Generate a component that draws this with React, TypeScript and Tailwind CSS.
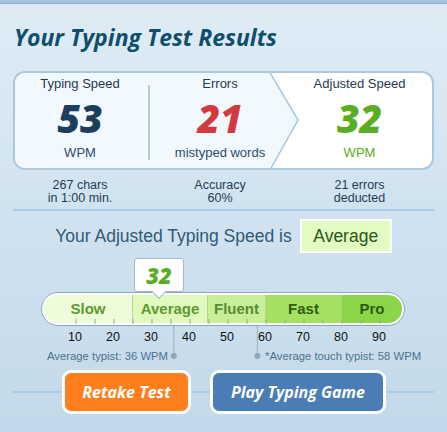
const ticks = Array.from({ length: 17 }, (_, i) => 10 + i * 5);
const scale = [10, 20, 30, 40, 50, 60, 70, 80, 90];

// x position (page px) of a wpm value on the meter
const toX = (wpm: number) => 37 + 3.8 * wpm;

const segments = [
  { label: "Slow", w: 88, bg: "bg-[#effcd9]", text: "text-[#5f9a30]" },
  { label: "Average", w: 75, bg: "bg-[#e0f9bd]", text: "text-[#5f9a30]" },
  { label: "Fluent", w: 58, bg: "bg-[#c7ef99]", text: "text-[#5a8c38]" },
  { label: "Fast", w: 76, bg: "bg-[#a5e160]", text: "text-[#2f5b13]" },
  { label: "Pro", w: 61, bg: "bg-[#8bd548]", text: "text-[#2f5b13]" },
];

function StatColumn({
  label,
  value,
  unit,
  valueClass,
  unitClass,
}: {
  label: string;
  value: string;
  unit: string;
  valueClass: string;
  unitClass: string;
}) {
  return (
    <div className="flex flex-col items-center pt-[3px]">
      <div className="text-[13px] leading-[16px] text-[#1f3a52]">{label}</div>
      <div
        className={`font-['Open_Sans',sans-serif] italic font-extrabold text-[39px] leading-[52px] ${valueClass}`}
      >
        {value}
      </div>
      <div className={`mt-[1px] text-[13px] leading-[16px] ${unitClass}`}>
        {unit}
      </div>
    </div>
  );
}

export default function App() {
  return (
    <div className="w-[447px] h-[432px] overflow-hidden bg-gradient-to-b from-[#dfecf6] to-[#c3d9e9] font-['Liberation_Sans',Arial,sans-serif]">
      <div className="h-[4px] bg-[#a4c6dd] border-b border-[#8db4cf]" />
      <div className="px-[13px]">
        <h1 className="mt-[19px] h-[28px] leading-[28px] pl-[1px] font-['Open_Sans',sans-serif] italic font-bold text-[23px] text-[#0f4f6e]">
          Your Typing Test Results
        </h1>

        {/* results card */}
        <div className="relative mt-[20px] h-[99px] rounded-[12px] border-2 border-[#abc8de] bg-white overflow-hidden">
          <svg
            className="absolute inset-0"
            width="417"
            height="95"
            viewBox="0 0 417 95"
          >
            <polygon points="0,0 254,0 283,47 255,95 0,95" fill="#f1f8fe" />
            <polyline
              points="254,-2 283,47 255,97"
              fill="none"
              stroke="#a9c6dc"
              strokeWidth="1.5"
            />
          </svg>
          <div className="relative flex h-full">
            <div className="w-[130px]">
              <StatColumn
                label="Typing Speed"
                value="53"
                unit="WPM"
                valueClass="text-[#1d3d5c]"
                unitClass="text-[#2a4e6b]"
              />
            </div>
            <div className="w-[8px] flex justify-center pt-[12px]">
              <div className="w-[2px] h-[75px] bg-[#b3cde0]" />
            </div>
            <div className="w-[134px]">
              <StatColumn
                label="Errors"
                value="21"
                unit="mistyped words"
                valueClass="text-[#d23a40]"
                unitClass="text-[#2a4e6b]"
              />
            </div>
            <div className="flex-1">
              <StatColumn
                label="Adjusted Speed"
                value="32"
                unit="WPM"
                valueClass="text-[#5aad22]"
                unitClass="text-[#5aad22]"
              />
            </div>
          </div>
        </div>

        {/* details under card */}
        <div className="flex px-[2px] mt-[9px] text-[12.5px] leading-[13px] text-[#1e3d55] text-center">
          <div className="w-[130px]">
            267 chars
            <br />
            in 1:00 min.
          </div>
          <div className="w-[8px]" />
          <div className="w-[134px]">
            Accuracy
            <br />
            60%
          </div>
          <div className="flex-1">
            21 errors
            <br />
            deducted
          </div>
        </div>

        <div className="mt-[4px] h-[2px] bg-[#a8cae6]" />

        {/* verdict */}
        <div className="mt-[8px] flex items-center justify-center gap-[8px]">
          <span className="text-[17.5px] text-[#2f5a78]">
            Your Adjusted Typing Speed is
          </span>
          <span className="h-[34px] w-[92px] flex items-center justify-center border-2 border-white bg-[#e2fbc1] text-[17.5px] text-[#2d561a]">
            Average
          </span>
        </div>
      </div>

      {/* meter */}
      <div className="relative">
        <div className="ml-[134px] mt-[5px] relative w-[50px] h-[34px] rounded-[3px] border-[1.5px] border-[#9db9cf] bg-white flex items-center justify-center">
          <span className="font-['Open_Sans',sans-serif] italic font-extrabold text-[22px] text-[#5aad22]">
            32
          </span>
          <div className="absolute left-1/2 -bottom-[6px] -ml-[5px] w-[10px] h-[10px] rotate-45 bg-white border-r-[1.5px] border-b-[1.5px] border-[#9db9cf] z-10" />
        </div>

        <div className="ml-[41px] w-[364px] h-[34px] rounded-full border-[1.5px] border-[#8ca7bc] bg-white p-[2px] relative">
          <div className="flex h-full rounded-full overflow-hidden">
            {segments.map((s, i) => (
              <div
                key={s.label}
                style={{ width: s.w }}
                className={`${s.bg} ${s.text} ${
                  i > 0 ? "border-l border-[#b6d69a]" : ""
                } ${i === segments.length - 1 ? "flex-1" : "shrink-0"} flex items-center justify-center text-[15px] font-bold`}
              >
                {s.label}
              </div>
            ))}
          </div>
          <svg className="absolute left-0 top-0" width="364" height="34">
            {ticks.map((t) => (
              <line
                key={t}
                x1={toX(t) - 41}
                x2={toX(t) - 41}
                y1="26"
                y2="31"
                stroke="#9bab9a"
                strokeWidth="1"
              />
            ))}
          </svg>
        </div>

        <div className="flex ml-[56px] mt-[3px] text-[12.5px] leading-[16px] text-[#111]">
          {scale.map((n) => (
            <div key={n} className="w-[38px] text-center">
              {n}
            </div>
          ))}
        </div>

        <div className="flex mt-[4px] text-[11.3px] leading-[14px] text-[#4d7290]">
          <div className="w-[168px] text-right">Average typist: 36 WPM</div>
          <div className="ml-[97px]">*Average touch typist: 58 WPM</div>
        </div>

        <svg
          className="absolute left-0 top-[68px] pointer-events-none"
          width="447"
          height="36"
        >
          <line x1={toX(36)} x2={toX(36)} y1="0" y2="30" stroke="#9ab0c2" />
          <circle cx={toX(36)} cy="30" r="3" fill="#8ea7ba" />
          <line x1={toX(58)} x2={toX(58)} y1="0" y2="30" stroke="#9ab0c2" />
          <circle cx={toX(58)} cy="30" r="3" fill="#8ea7ba" />
        </svg>
      </div>

      {/* actions */}
      <div className="relative mt-[7px] px-[13px]">
        <div className="absolute left-[13px] right-[13px] top-[21px] h-[2px] bg-[#a9cce8]" />
        <div className="relative flex gap-[19px] pl-[49px]">
          <button className="w-[129px] h-[44px] rounded-[9px] border-[3px] border-white bg-[#ff7f1e] text-white font-['Open_Sans',sans-serif] italic font-bold text-[16px]">
            Retake Test
          </button>
          <button className="w-[176px] h-[44px] rounded-[9px] border-[3px] border-white bg-[#4a7cb6] text-white font-['Open_Sans',sans-serif] italic font-bold text-[16px]">
            Play Typing Game
          </button>
        </div>
      </div>
    </div>
  );
}
